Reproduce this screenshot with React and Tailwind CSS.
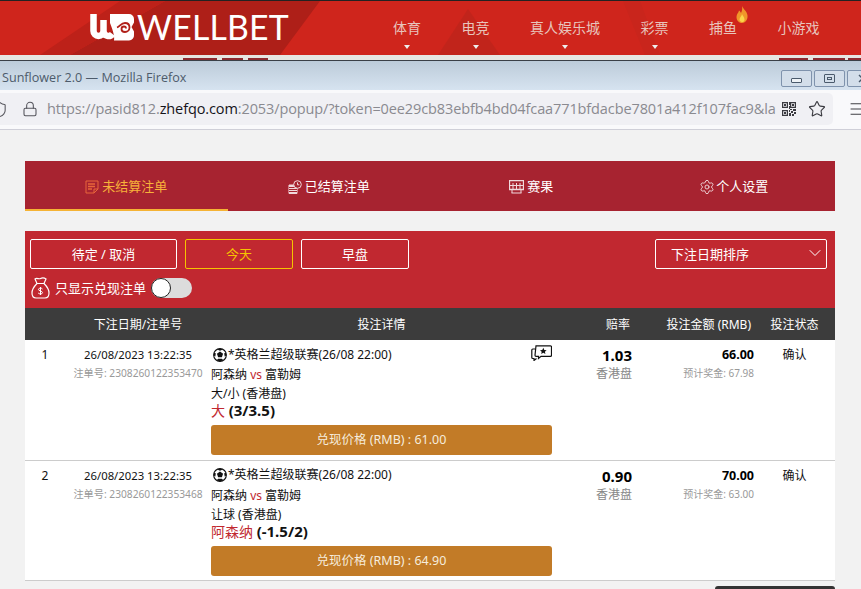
import { ChevronDown, Lock, Menu, Settings, Shield, Star } from 'lucide-react';

const NAV = [
  { label: '体育', caret: true },
  { label: '电竞', caret: true },
  { label: '真人娱乐城', caret: true },
  { label: '彩票', caret: true },
  { label: '捕鱼', hot: true },
  { label: '小游戏' },
];

const BETS = [
  {
    no: '1',
    serial: '2308260122353470',
    market: '大/小 (香港盘)',
    pick: '大',
    line: '(3/3.5)',
    odds: '1.03',
    stake: '66.00',
    payout: '67.98',
    cashout: '61.00',
    chat: true,
  },
  {
    no: '2',
    serial: '2308260122353468',
    market: '让球 (香港盘)',
    pick: '阿森纳',
    line: '(-1.5/2)',
    odds: '0.90',
    stake: '70.00',
    payout: '63.00',
    cashout: '64.90',
  },
];

const COLS = 'grid grid-cols-[40px_146px_341px_80px_122px_81px]';

function Flame() {
  return (
    <svg width="12" height="17" viewBox="0 0 12 17" className="absolute -top-[11px] -right-[11px]">
      <path d="M6 0c1 3 5 5 5.500 9.500C12 14 9 17 6 17S.5 14.500.5 11C.5 8 2.500 7 3 4.500 4.500 5.500 5 7 5 7 6 5 6.500 3 6 0z" fill="#f0962a" />
      <path d="M6 8c.5 2 2.500 3 2.500 5.500C8.500 15.500 7.300 16 6 16s-2.500-1-2.500-2.500C3.500 11.500 5.500 10.500 6 8z" fill="#fbd44a" />
    </svg>
  );
}

function Logo() {
  return (
    <div className="flex w-[200px] items-center gap-[2px]">
      <svg width="45" height="27" viewBox="0 0 45 27" className="shrink-0">
        <path d="M3.500 0V17a5 5 0 0 0 10 0V6M13.500 17a5 5 0 0 0 9 3" fill="none" stroke="#fff" strokeWidth="6.500" />
        <path d="M20 0H39a5 5 0 0 1 5 5V8.500L41.500 13 44 17.500V21a5 5 0 0 1-5 5.500H24C25 22 22 14 20 9z" fill="#fff" />
        <path d="M27 13.500c3-1 4-4.500 8-4.500 3 0 4.500 2 4.500 4.500S37.500 18 35 18s-3.500-1.500-3.500-3 1-2.500 2.500-2.500 2 1 2 2" fill="none" stroke="#b01f18" strokeWidth="1.800" />
      </svg>
      <span className="font-['Lato',sans-serif] text-[33.800px] leading-none tracking-[0.2px] text-white">WELLBET</span>
    </div>
  );
}

function SiteHeader() {
  return (
    <header className="relative flex h-[54px] items-center overflow-hidden bg-[#cf251c] pl-[90px]">
      <svg width="861" height="54" className="absolute left-0 top-0">
        <polygon points="70,54 165,0 320,0 280,54" fill="#ae1f18" />
        <polygon points="40,54 120,0 165,0 70,54" fill="#bd2119" />
        <polygon points="438,54 468,8 500,54" fill="#c1241b" />
        <polygon points="623,0 640,0 660,54 645,54" fill="#c9251c" />
      </svg>
      <div className="relative">
        <Logo />
      </div>
      <nav className="relative ml-[103px] flex gap-[40.500px] text-[14px] text-[#e8c4bc]">
        {NAV.map((item) => (
          <div key={item.label} className="relative flex h-[54px] items-center">
            <span className="relative -mt-[1px]">
              {item.label}
              {item.hot && <Flame />}
            </span>
            {item.caret && (
              <span className="absolute bottom-[6px] left-1/2 -ml-[3px] h-0 w-0 border-x-[3.500px] border-t-[4px] border-x-transparent border-t-[#eee]" />
            )}
          </div>
        ))}
      </nav>
    </header>
  );
}

function WindowChrome() {
  return (
    <>
      <div className="flex h-[5px] items-end bg-[#e6e6e2] pl-[183px]">
        <span className="h-[2px] w-[34px] bg-[#8e2a30]" />
        <span className="ml-[5px] h-[2px] w-[21px] bg-[#8e2a30]" />
        <span className="ml-[5px] h-[2px] w-[20px] bg-[#8e2a30]" />
        <span className="ml-[511px] h-[2px] w-[29px] bg-[#8e2a30]" />
        <span className="ml-[5px] h-[2px] w-[32px] bg-[#8e2a30]" />
        <span className="ml-[3px] h-[2px] w-[13px] bg-[#8e2a30]" />
      </div>
      <div className="h-px bg-[#3a3f46]" />
      <div className="flex h-[29px] items-center justify-between overflow-hidden bg-[linear-gradient(#bccbd9,#d6e3f0)] pl-[2px]">
        <span className="mt-[6px] font-['Open_Sans',sans-serif] text-[12.600px] text-[#4d5b6b]">Sunflower 2.0 — Mozilla Firefox</span>
        <div className="-mr-[17px] mt-[6px] flex shrink-0 gap-[2px]">
          <div className="flex h-[17px] w-[31px] items-center justify-center rounded-[2px] border border-[#7f93ad] bg-[#d3deea]">
            <span className="mt-[3px] h-[5px] w-[11px] rounded-[1px] border border-[#4a5a6c] bg-[#eef2f6]" />
          </div>
          <div className="flex h-[17px] w-[31px] items-center justify-center rounded-[2px] border border-[#7f93ad] bg-[#d3deea]">
            <span className="flex h-[9px] w-[11px] items-center justify-center rounded-[1px] border border-[#4a5a6c]">
              <span className="h-[3px] w-[5px] border border-[#4a5a6c]" />
            </span>
          </div>
          <div className="flex h-[17px] w-[31px] items-center justify-center rounded-[2px] border border-[#7f93ad] bg-[#d3deea]">
            <svg width="9" height="9" viewBox="0 0 9 9" stroke="#4a5a6c" strokeWidth="1.400">
              <path d="M1 1l7 7M8 1L1 8" />
            </svg>
          </div>
        </div>
      </div>
      <div className="flex h-[40px] items-center overflow-hidden border-b border-[#cfcfd8] bg-[#f9f9fb] pb-[1px]">
        <div className="flex h-[32px] w-[833px] shrink-0 items-center rounded-r-[5px] bg-[#f0f0f4]">
          <Shield size={17} strokeWidth={1.500} className="-ml-[9px] shrink-0 text-[#55555c]" />
          <Lock size={16} strokeWidth={1.600} className="ml-[14px] shrink-0 text-[#55555c]" />
          <div className="ml-[9px] w-[729px] shrink-0 overflow-hidden whitespace-nowrap font-['Open_Sans',sans-serif] text-[14.500px] tracking-[-0.110px] text-[#8a8a90]">
            https://pasid812.<span className="text-[#15141a]">zhefqo.com</span>:2053/popup/?token=0ee29cb83ebfb4bd04fcaa771bfdacbe7801a412f107fac9&amp;la
          </div>
          <svg width="14" height="14" viewBox="0 0 14 14" className="ml-[6px] shrink-0" fill="#3a3a40">
            <path fillRule="evenodd" d="M0 0h6v6H0zM1.200 1.200v3.600h3.600V1.200zM8 0h6v6H8zM9.200 1.200v3.600h3.600V1.200zM0 8h6v6H0zM1.200 9.200v3.600h3.600V9.200z" />
            <path d="M2 2h2v2H2zM10 2h2v2h-2zM2 10h2v2H2zM7 0h1v3H7zM7 4h1v3H7zM8 7h2v1H8zM11 7h3v2h-3zM7 8h1v2H7zM9 9h2v2H9zM12 10h2v2h-2zM7 11h2v3H7zM10 12h2v2h-2z" />
          </svg>
          <Star size={18} strokeWidth={1.500} className="ml-[12px] shrink-0 text-[#3a3a40]" />
        </div>
        <Menu size={18} strokeWidth={1.300} className="ml-[15px] shrink-0 text-[#3a3a40]" />
      </div>
    </>
  );
}

function TabIcon({ kind, className }) {
  if (kind === 'open') {
    return (
      <svg width="14" height="14" viewBox="0 0 14 14" fill="none" stroke="currentColor" className={className}>
        <path d="M13 9V1H1v12h8l4-4zM9 13V9h4" />
        <path d="M3 4h7M3 6.500h7M3 9h4" strokeWidth="1.300" />
      </svg>
    );
  }
  if (kind === 'settled') {
    return (
      <svg width="14" height="14" viewBox="0 0 14 14" fill="none" stroke="currentColor" className={className}>
        <path d="M1 5h8v8.500H1z" fill="currentColor" />
        <path d="M1 7.500h8M1 9.500h8M1 11.500h8" stroke="#a72330" />
        <circle cx="9.500" cy="4.500" r="3.800" fill="#a72330" />
        <path d="M9.500 2.500v2.300h1.800" />
      </svg>
    );
  }
  if (kind === 'result') {
    return (
      <svg width="15" height="14" viewBox="0 0 15 14" fill="none" stroke="currentColor" className={className}>
        <path d="M.5.500h14v9H.5z" strokeWidth="1.300" />
        <path d="M2.500 13h10M4 3v6.500M7.500 3v6.500M11 3v6.500M1 5.500h13M3 10v3M12 10v3" />
      </svg>
    );
  }
  return <Settings size={16} strokeWidth={1.400} className={className} />;
}

function Tabs() {
  const tabs = [
    { label: '未结算注单', kind: 'open', active: true },
    { label: '已结算注单', kind: 'settled' },
    { label: '赛果', kind: 'result' },
    { label: '个人设置', kind: 'settings' },
  ];
  return (
    <div className="grid h-[50px] grid-cols-4 bg-[#a72330]">
      {tabs.map((t) => (
        <div
          key={t.label}
          className={
            t.active
              ? 'flex items-center justify-center gap-[3px] border-b-2 border-[#f5b335] pt-[4px] text-[13px] text-[#f7b23a]'
              : t.kind === 'settings'
                ? 'flex items-center justify-center gap-[1px] pt-[2px] text-[13px] text-white'
                : 'flex items-center justify-center gap-[3px] pt-[2px] text-[13px] text-white'
          }
        >
          <TabIcon kind={t.kind} className={t.active ? 'text-[#e8663a]' : 'text-[#f0d8dc]'} />
          {t.label}
        </div>
      ))}
    </div>
  );
}

function MoneyBag() {
  return (
    <svg width="19" height="22" viewBox="0 0 19 22" fill="none" stroke="#fff" strokeWidth="1.200">
      <path d="M6 6.500 4 2c2-1.500 3.500.5 5.500-.5C11.500.500 13 .500 15 2l-2 4.500z" />
      <path d="M6 6.500C3 9.500 1 13 1 16c0 3 1.500 5 4 5h9c2.500 0 4-2 4-5 0-3-2-6.500-5-9.500" />
      <path d="M11.500 12c-.5-1-3.500-1.500-4 .2-.5 2 4.200 1.500 4 3.500-.2 1.800-3.500 1.500-4.300.3M9.500 10v8" strokeWidth="1" />
    </svg>
  );
}

function FilterPanel() {
  const btn = 'flex h-[30px] items-center justify-center rounded-[2px] border pt-[1px] text-[13px]';
  return (
    <div className="flex h-[77px] flex-col bg-[#c12830] pl-[5px] pr-[8px] pt-[8px] text-white">
      <div className="flex items-start">
        <div className={`${btn} w-[147px] border-white`}>待定 / 取消</div>
        <div className={`${btn} ml-[8px] w-[108px] border-[#f5c400] text-[#f5c400]`}>今天</div>
        <div className={`${btn} ml-[8px] w-[108px] border-white`}>早盘</div>
        <div className="ml-auto flex h-[30px] w-[172px] items-center justify-between rounded-[2px] border border-white pl-[15px] pr-px pt-[1px] text-[13px]">
          下注日期排序
          <ChevronDown size={20} strokeWidth={1.200} className="-mt-[3px]" />
        </div>
      </div>
      <div className="mt-[8px] flex items-center pl-[1px]">
        <MoneyBag />
        <span className="ml-[5px] pt-[1px] text-[13px]">只显示兑现注单</span>
        <div className="ml-[5px] flex h-[20px] w-[41px] items-center rounded-full bg-[#dcdcdc]">
          <span className="h-[20px] w-[20px] rounded-full border border-[#222] bg-white" />
        </div>
      </div>
    </div>
  );
}

function TableHead() {
  return (
    <div className={`${COLS} h-[32px] items-center bg-[#3c3c3c] pt-[1px] text-center text-[12px] text-white`}>
      <span />
      <span>下注日期/注单号</span>
      <span>投注详情</span>
      <span className="pr-[2px] text-right">赔率</span>
      <span className="pr-[3px] text-right">投注金额 (RMB)</span>
      <span>投注状态</span>
    </div>
  );
}

function Ball() {
  return (
    <svg width="14" height="14" viewBox="0 0 15 15" className="shrink-0">
      <circle cx="7.500" cy="7.500" r="6.800" fill="#fff" stroke="#111" strokeWidth="1.200" />
      <polygon points="7.500,3.800 10.800,6.200 9.500,10 5.500,10 4.200,6.200" fill="#111" />
      <path d="M4.500 1.500 7.500 3 10.500 1.500 7.500.5zM1 5 3 5.500 2.500 9 .8 8zM14 5 12 5.500 12.500 9 14.200 8zM4 13 5.500 11.500H9.500L11 13 7.500 14.500z" fill="#111" />
    </svg>
  );
}

function ChatStar() {
  return (
    <svg width="21" height="16" viewBox="0 0 21 16" fill="none" stroke="#111" strokeWidth="1.200" className="absolute right-0 top-[5px]">
      <path d="M5 .8h14.500a1 1 0 0 1 1 1v8.500a1 1 0 0 1-1 1H10L7.500 13.500V11.300H5a1 1 0 0 1-1-1z" fill="#fff" />
      <path d="M4 4H1.800a1 1 0 0 0-1 1v7.500a1 1 0 0 0 1 1H3V15.500L5.500 13.500" />
      <polygon points="12.300,2.800 13.300,5 15.600,5.200 13.900,6.800 14.400,9 12.300,7.800 10.200,9 10.700,6.800 9,5.200 11.300,5" fill="#111" stroke="none" />
    </svg>
  );
}

function BetRow({ bet }) {
  return (
    <div className={`${COLS} h-[120.500px] border-b border-[#ccc] bg-white text-[12px] leading-[18px] text-[#111]`}>
      <div className="pt-[6px] text-center">{bet.no}</div>
      <div className="pt-[7px] text-center">
        <div className="text-[11.300px] leading-[16px]">26/08/2023 13:22:35</div>
        <div className="mt-[2px] whitespace-nowrap text-[10.200px] leading-[16px] text-[#999]">注单号: {bet.serial}</div>
      </div>
      <div className="relative">
        {bet.chat && <ChatStar />}
        <div className="flex h-[28px] items-center pl-[2px] pt-[1px]">
          <Ball />
          <span className="ml-[1px]">*英格兰超级联赛(26/08 22:00)</span>
        </div>
        <div className="-mt-[3px] leading-[19px]">
          阿森纳 <span className="text-[#c12830]">vs</span> 富勒姆
        </div>
        <div className="mt-[2px] leading-[15px]">{bet.market}</div>
        <div className="text-[14px] leading-[18px]">
          <span className="text-[#c12830]">{bet.pick}</span> <b className="text-[15px]">{bet.line}</b>
        </div>
        <div className="mt-[5px] flex h-[30px] items-center justify-center rounded-[3px] bg-[#c27b27] text-[12.500px] text-[#f6ecdc]">
          兑现价格 (RMB) : {bet.cashout}
        </div>
      </div>
      <div className="pt-[6px] text-right">
        <div className="text-[15px] font-bold leading-[18px] text-black">{bet.odds}</div>
        <div className="mt-[1px] text-[#888]">香港盘</div>
      </div>
      <div className="pt-[6px] text-right">
        <div className="text-[12.500px] font-bold leading-[18px] text-black">{bet.stake}</div>
        <div className="text-[10px] text-[#999]">预计奖金: {bet.payout}</div>
      </div>
      <div className="pt-[6px] text-center">确认</div>
    </div>
  );
}

export default function App() {
  return (
    <div className="h-[589px] w-[861px] overflow-hidden bg-[#f2f2f2] font-['Noto_Sans','Noto_Sans_CJK_SC',sans-serif]">
      <div className="h-px bg-[#222]" />
      <SiteHeader />
      <WindowChrome />
      <main className="ml-[25px] mt-[31px] w-[810px]">
        <Tabs />
        <div className="h-[20px]" />
        <FilterPanel />
        <TableHead />
        {BETS.map((b) => (
          <BetRow key={b.no} bet={b} />
        ))}
        <div className="ml-auto mt-[5px] h-[5px] w-[120px] rounded-t-[3px] bg-[#333]" />
      </main>
    </div>
  );
}
